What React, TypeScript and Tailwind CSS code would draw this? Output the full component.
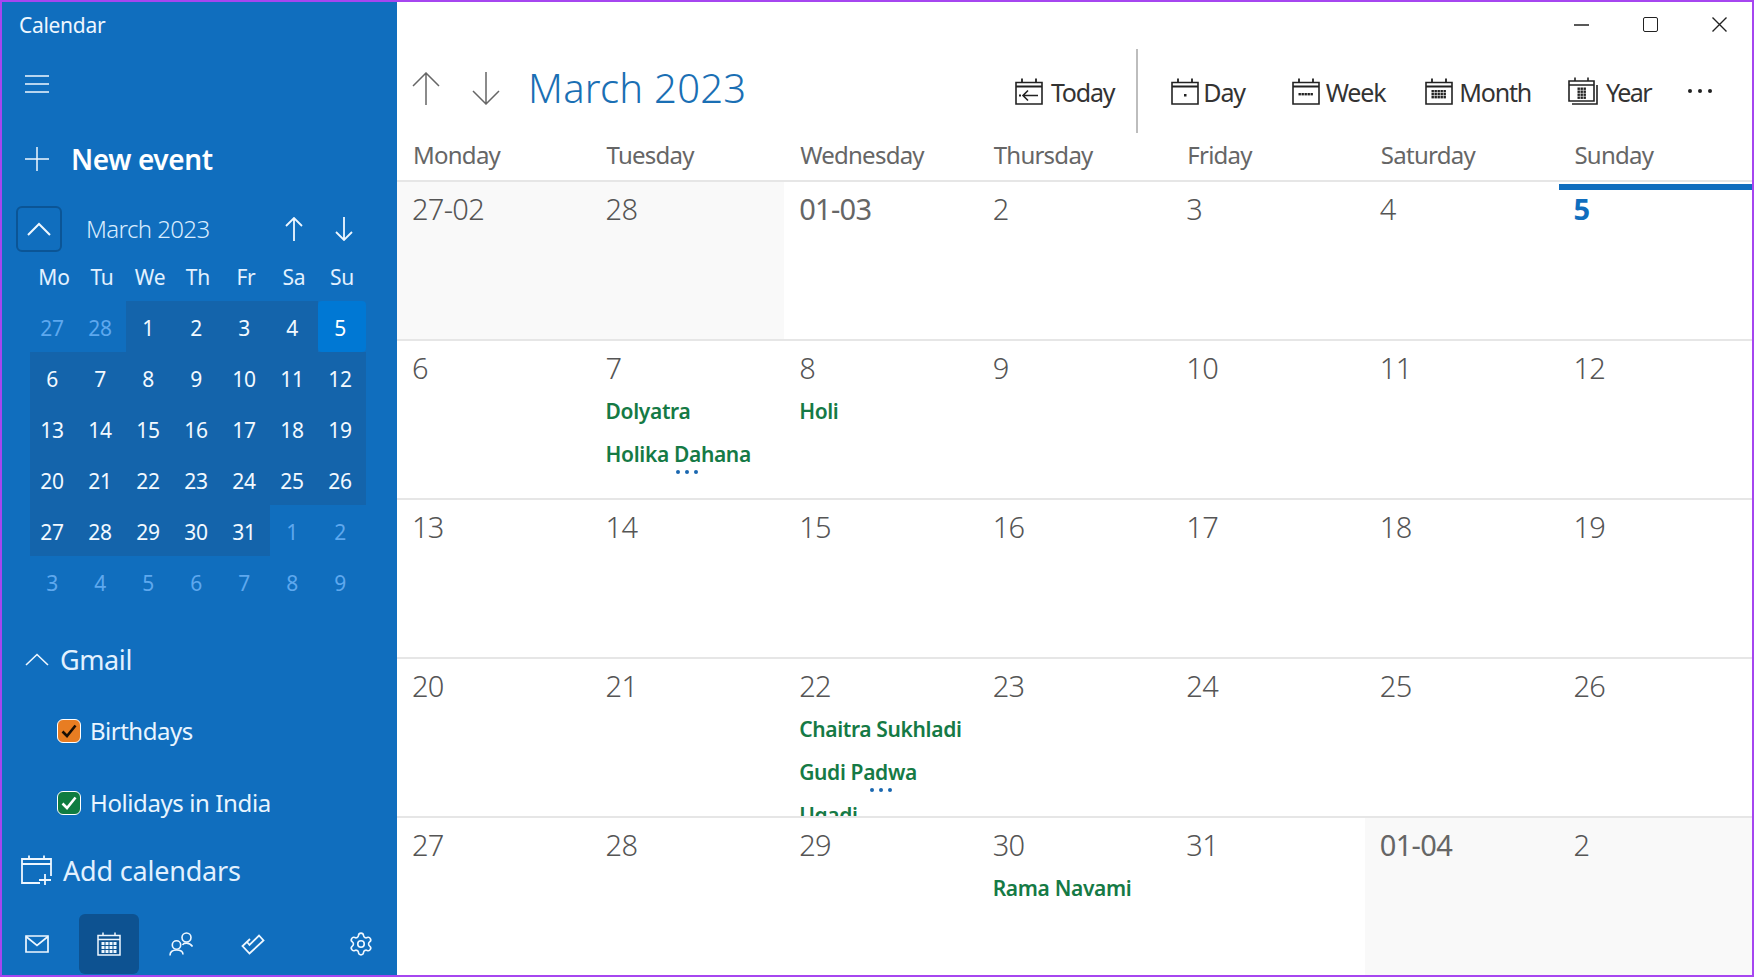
import React from "react";
import { Settings } from "lucide-react";

const font = { fontFamily: '"Noto Sans", "Open Sans", sans-serif' };

type IconProps = { className?: string };

const S = ({ w, h, children, className, sw = 1.5 }: { w: number; h: number; children: React.ReactNode; className?: string; sw?: number }) => (
  <svg width={w} height={h} viewBox={`0 0 ${w} ${h}`} fill="none" stroke="currentColor" strokeWidth={sw} className={className}>
    {children}
  </svg>
);

const ArrowUp = ({ w, h, sw = 1.5 }: { w: number; h: number; sw?: number }) => (
  <S w={w} h={h} sw={sw}>
    <path d={`M${w / 2} ${h}V1M1 ${w / 2}L${w / 2} 1L${w - 1} ${w / 2}`} />
  </S>
);
const ArrowDown = ({ w, h, sw = 1.5 }: { w: number; h: number; sw?: number }) => (
  <S w={w} h={h} sw={sw}>
    <path d={`M${w / 2} 0V${h - 1}M1 ${h - w / 2}L${w / 2} ${h - 1}L${w - 1} ${h - w / 2}`} />
  </S>
);

const CalBase = ({ children, w = 28, h = 27 }: { children?: React.ReactNode; w?: number; h?: number }) => (
  <S w={w} h={h} sw={1.6}>
    <path d={`M1 4.5H${w - 1}V${h - 1}H1Z`} />
    <path d={`M1 8.5H${w - 1}M7 0.5V4.5M${w - 7} 0.5V4.5`} strokeWidth={1.8} />
    {children}
  </S>
);

const Dots = ({ rows, cols, x, y, gap = 3 }: { rows: number; cols: number; x: number; y: number; gap?: number }) => (
  <g fill="currentColor" stroke="none">
    {Array.from({ length: rows }).flatMap((_, r) =>
      Array.from({ length: cols }).map((_, c) => <rect key={`${r}-${c}`} x={x + c * gap} y={y + r * gap} width={2.4} height={2.4} />)
    )}
  </g>
);

const TodayIcon = () => (
  <CalBase>
    <path d="M23 17.5H8M13 12.5L8 17.5L13 22.5" />
    <rect x="4" y="16.5" width="2" height="2" fill="currentColor" stroke="none" />
  </CalBase>
);
const DayIcon = () => (
  <CalBase>
    <rect x="13" y="16" width="2.5" height="2.5" fill="currentColor" stroke="none" />
  </CalBase>
);
const WeekIcon = () => (
  <CalBase>
    <Dots rows={1} cols={5} x={6.5} y={15} />
  </CalBase>
);
const MonthIcon = () => (
  <CalBase>
    <Dots rows={3} cols={5} x={6.5} y={12} />
  </CalBase>
);
const YearIcon = () => (
  <S w={30} h={28} sw={1.6}>
    <path d="M1 4H26V24H1Z" />
    <path d="M1 8H26M7 0.5V4M20 0.5V4M4 27H29V8" />
    <Dots rows={4} cols={3} x={9.5} y={10.5} />
  </S>
);

const SideCal = () => (
  <S w={24} h={24}>
    <path d="M1 3.5H23V23H1Z" />
    <path d="M1 7.5H23M6 0.5V3.5M18 0.5V3.5" />
    <g fill="currentColor" stroke="none">
      {[0, 1, 2].flatMap((r) =>
        [0, 1, 2, 3].map((c) => <rect key={`${r}-${c}`} x={4.5 + c * 4} y={10 + r * 4} width={3} height={3} />)
      )}
    </g>
  </S>
);

const Check = ({ className }: IconProps) => (
  <svg width="16" height="14" viewBox="0 0 16 14" fill="none" stroke="currentColor" strokeWidth="2.6" className={className}>
    <path d="M1.5 7.5L6 12L14.5 1.5" />
  </svg>
);

const Checkbox = ({ bg, text }: { bg: string; text: string }) => (
  <div className={`flex h-[24px] w-[24px] items-center justify-center rounded-[6px] border-[1.5px] border-white ${bg} ${text}`}>
    <Check />
  </div>
);

const mini: [string, boolean, boolean][][] = [
  ["27", "28", "1", "2", "3", "4", "5"],
  ["6", "7", "8", "9", "10", "11", "12"],
  ["13", "14", "15", "16", "17", "18", "19"],
  ["20", "21", "22", "23", "24", "25", "26"],
  ["27", "28", "29", "30", "31", "1", "2"],
  ["3", "4", "5", "6", "7", "8", "9"],
].map((row, r) =>
  row.map((d, c) => {
    const inMonth = !(r === 0 && c < 2) && !(r === 4 && c > 4) && r !== 5;
    return [d, inMonth, r === 0 && c === 6] as [string, boolean, boolean];
  })
);

const weekShort = ["Mo", "Tu", "We", "Th", "Fr", "Sa", "Su"];
const weekLong = ["Monday", "Tuesday", "Wednesday", "Thursday", "Friday", "Saturday", "Sunday"];

type Cell = { d: string; muted?: boolean; today?: boolean; strong?: boolean; events?: string[]; more?: boolean };
const month: Cell[] = [
  { d: "27-02", muted: true },
  { d: "28", muted: true },
  { d: "01-03", strong: true },
  { d: "2" },
  { d: "3" },
  { d: "4" },
  { d: "5", today: true },
  { d: "6" },
  { d: "7", events: ["Dolyatra", "Holika Dahana"], more: true },
  { d: "8", events: ["Holi"] },
  { d: "9" },
  { d: "10" },
  { d: "11" },
  { d: "12" },
  { d: "13" },
  { d: "14" },
  { d: "15" },
  { d: "16" },
  { d: "17" },
  { d: "18" },
  { d: "19" },
  { d: "20" },
  { d: "21" },
  { d: "22", events: ["Chaitra Sukhladi", "Gudi Padwa", "Ugadi"], more: true },
  { d: "23" },
  { d: "24" },
  { d: "25" },
  { d: "26" },
  { d: "27" },
  { d: "28" },
  { d: "29" },
  { d: "30", events: ["Rama Navami"] },
  { d: "31" },
  { d: "01-04", muted: true, strong: true },
  { d: "2", muted: true },
];

const ViewBtn = ({ icon, label, className = "", labelClass = "tracking-[-1.2px]" }: { icon: React.ReactNode; label: string; className?: string; labelClass?: string }) => (
  <div className={`flex items-center ${className}`}>
    {icon}
    <span className={`mt-[2px] text-[25px] leading-[34px] text-[#333] ${labelClass}`}>{label}</span>
  </div>
);

export default function App() {
  return (
    <div style={font} className="flex h-[977px] w-[1754px] overflow-hidden border-2 border-[#a646f0] bg-white">
      <aside className="flex w-[395px] shrink-0 flex-col bg-[#106ebe] text-[#eef7ff]">
        <div className="flex h-[46px] items-center pt-[2px] pl-[17px] text-[21px] tracking-[-0.3px]">Calendar</div>
        <div className="flex h-[72px] items-center pl-[23px]">
          <S w={24} h={18}>
            <path d="M0 1H24M0 9H24M0 17H24" />
          </S>
        </div>
        <div className="flex h-[78px] items-center pl-[23px]">
          <S w={24} h={24}>
            <path d="M12 0V24M0 12H24" />
          </S>
          <span className="ml-[22px] text-[28px] font-semibold tracking-[-0.4px] text-white">New event</span>
        </div>
        <div className="mt-[8px] flex h-[46px] items-center pl-[14px]">
          <div className="flex h-[46px] w-[46px] items-center justify-center rounded-[6px] border-2 border-[#0b5596]">
            <S w={24} h={14} sw={2}>
              <path d="M1 13L12 2L23 13" />
            </S>
          </div>
          <span className="ml-[24px] text-[24px] font-light tracking-[-0.6px] text-[#d8ecff]">March 2023</span>
          <div className="ml-auto mr-[44px] flex items-center gap-[32px]">
            <ArrowUp w={18} h={24} sw={1.8} />
            <ArrowDown w={18} h={24} sw={1.8} />
          </div>
        </div>
        <div className="ml-[28px] grid h-[49px] w-[336px] grid-cols-7 items-center pt-[2px] text-center text-[21px] tracking-[-0.2px] text-[#e2f1ff]">
          {weekShort.map((w) => (
            <span key={w}>{w}</span>
          ))}
        </div>
        <div className="ml-[28px] grid w-[336px] grid-cols-7 grid-rows-[repeat(6,51px)] text-[21px] tracking-[-0.3px]">
          {mini.flat().map(([d, inMonth, sel], i) => (
            <div
              key={i}
              className={`flex items-center justify-center pt-[4px] pr-[4px] ${
                sel ? "rounded-[4px] bg-[#0078d4] text-white" : inMonth ? "bg-[#1464ab] text-[#f2f9ff]" : "text-[#5ea8ee]"
              }`}
            >
              {d}
            </div>
          ))}
        </div>
        <div className="mt-[18px] flex h-[68px] items-center pl-[23px]">
          <S w={24} h={13} sw={1.6}>
            <path d="M1 12L12 1.5L23 12" />
          </S>
          <span className="ml-[11px] pt-[2px] text-[27px] tracking-[-0.4px] text-[#e2f1ff]">Gmail</span>
        </div>
        <div className="mt-[2px] flex h-[72px] items-center pl-[55px]">
          <Checkbox bg="bg-[#e87d22]" text="text-[#1a0f05]" />
          <span className="ml-[9px] text-[24px] tracking-[-0.5px] text-[#e9f5ff]">Birthdays</span>
        </div>
        <div className="flex h-[72px] items-center pl-[55px]">
          <Checkbox bg="bg-[#107c41]" text="text-white" />
          <span className="ml-[9px] text-[24px] tracking-[-0.4px] text-[#e9f5ff]">Holidays in India</span>
        </div>
        <div className="flex h-[62px] items-center pl-[19px]">
          <S w={31} h={30} sw={1.8}>
            <path d="M19 28H1V4H30V21" />
            <path d="M1 9H30M8 0.5V4M23 0.5V4M24 19V30M18 25H30" />
          </S>
          <span className="ml-[11px] pt-[2px] text-[27px] tracking-[-0.2px] text-[#e2f1ff]">Add calendars</span>
        </div>
        <div className="mt-auto mb-[1px] flex h-[60px] items-center">
          <div className="flex w-[70px] justify-center">
            <S w={24} h={18} sw={1.7}>
              <path d="M1 1H23V17H1Z" />
              <path d="M1 1.5L12 10.5L23 1.5" />
            </S>
          </div>
          <div className="ml-[7px] flex h-[60px] w-[60px] items-center justify-center rounded-[6px] bg-[#0d5291]">
            <SideCal />
          </div>
          <div className="ml-[12px] flex w-[60px] justify-center">
            <S w={24} h={24} sw={1.6}>
              <circle cx="7.5" cy="13" r="4.2" />
              <path d="M1 23.5C1 19.8 3.5 18 7.5 18C11.5 18 14 19.8 14 22.5" />
              <circle cx="17.5" cy="5.5" r="4.5" />
              <path d="M13.5 13C14.5 11 20 9.5 23.5 14.5" />
            </S>
          </div>
          <div className="ml-[12px] flex w-[60px] justify-center">
            <S w={24} h={21} sw={1.8}>
              <path d="M9 5L1.5 12L8.5 19.5L22.5 6.5L18 1.5L8.5 11L6.5 8.5" strokeLinejoin="miter" />
            </S>
          </div>
          <div className="ml-auto mr-[6px] flex w-[60px] justify-center">
            <Settings size={26} strokeWidth={1.5} />
          </div>
        </div>
      </aside>

      <main className="flex min-w-0 flex-1 flex-col">
        <div className="flex h-[47px] items-center pb-[2px] text-[#222]">
          <div className="ml-auto flex items-center">
            <S w={15} h={2} sw={1.5}>
              <path d="M0 1H15" />
            </S>
            <div className="ml-[54px] h-[15px] w-[15px] rounded-[2px] border-[1.5px] border-[#222]" />
            <div className="ml-[54px] mr-[25px]">
              <S w={15} h={15} sw={1.4}>
                <path d="M0.5 0.5L14.5 14.5M14.5 0.5L0.5 14.5" />
              </S>
            </div>
          </div>
        </div>
        <div className="flex h-[84px] items-center">
          <div className="flex items-center pb-[6px]">
            <div className="ml-[15px] flex items-center gap-[32px] text-[#666]">
              <ArrowUp w={28} h={33} />
              <ArrowDown w={28} h={33} />
            </div>
            <h1 className="ml-[28px] text-[40px] leading-none font-light tracking-[0.25px] text-[#1a6fb4]">March 2023</h1>
          </div>
          <div className="ml-auto flex h-full items-center text-[#222]">
            <ViewBtn icon={<TodayIcon />} label="Today" className="gap-[8px]" />
            <div className="ml-[22px] h-full w-[2px] bg-[#bdbdbd]" />
            <ViewBtn icon={<DayIcon />} label="Day" className="ml-[33px] gap-[4px]" />
            <ViewBtn icon={<WeekIcon />} label="Week" className="ml-[47px] gap-[6px]" />
            <ViewBtn icon={<MonthIcon />} label="Month" className="ml-[40px] gap-[6px]" />
            <ViewBtn icon={<YearIcon />} label="Year" className="ml-[37px] gap-[8px]" labelClass="tracking-[-1.6px]" />
            <div className="ml-[37px] mr-[40px] flex gap-[6px]">
              <span className="h-[4px] w-[4px] rounded-full bg-[#222]" />
              <span className="h-[4px] w-[4px] rounded-full bg-[#222]" />
              <span className="h-[4px] w-[4px] rounded-full bg-[#222]" />
            </div>
          </div>
        </div>
        <div className="grid h-[49px] grid-cols-7 items-center border-b-2 border-[#e6e6e6] pb-[3px]">
          {weekLong.map((w) => (
            <span key={w} className="pl-[16px] text-[24px] leading-[34px] tracking-[-0.75px] text-[#666]">
              {w}
            </span>
          ))}
        </div>
        <div className="grid flex-1 grid-cols-7 grid-rows-[159px_159px_159px_159px_157px]">
          {month.map((c, i) => (
            <div
              key={i}
              className={`relative overflow-hidden pl-[15px] ${i < 28 ? "border-b-2 border-[#e6e6e6]" : ""} ${c.muted ? "bg-[#f9f9f9]" : "bg-white"}`}
            >
              {c.today && <div className="absolute top-[2px] right-0 left-[1px] h-[6px] bg-[#106ebe]" />}
              <div
                className={`mt-[7px] h-[40px] text-[29px] leading-[40px] tracking-[-0.7px] ${
                  c.today ? "font-bold text-[#106ebe]" : c.strong ? "text-[#666]" : "font-light text-[#555]"
                }`}
              >
                {c.d}
              </div>
              {c.events && (
                <div className="mt-[2px] flex flex-col">
                  {c.events.map((e) => (
                    <div key={e} className="h-[43px] text-[21px] leading-[43px] font-semibold tracking-[-0.35px] whitespace-nowrap text-[#157a45]">
                      {e}
                    </div>
                  ))}
                </div>
              )}
              {c.more && (
                <div className="absolute top-[129px] left-0 flex w-full justify-center gap-[5px]">
                  <span className="h-[4px] w-[4px] rounded-full bg-[#1a67b0]" />
                  <span className="h-[4px] w-[4px] rounded-full bg-[#1a67b0]" />
                  <span className="h-[4px] w-[4px] rounded-full bg-[#1a67b0]" />
                </div>
              )}
            </div>
          ))}
        </div>
      </main>
    </div>
  );
}
